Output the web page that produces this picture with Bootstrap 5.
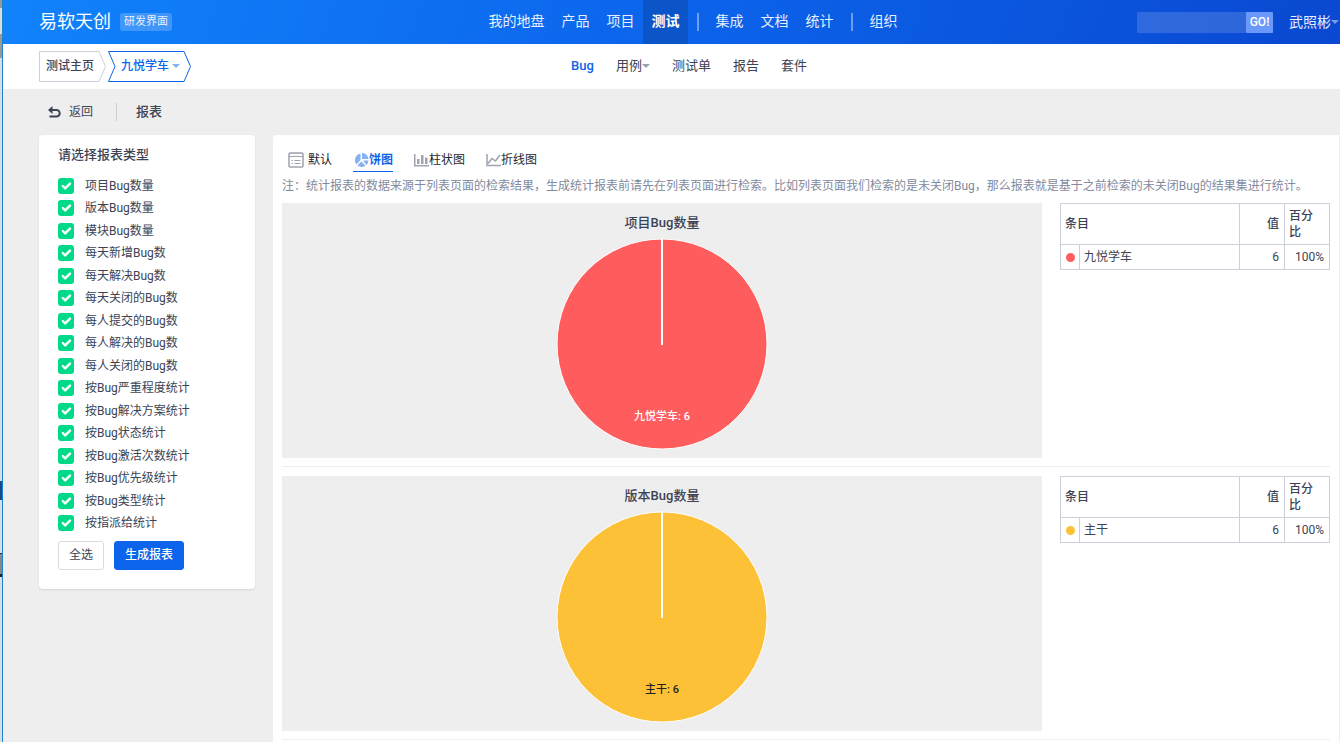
<!DOCTYPE html>
<html lang="zh-CN">
<head>
<meta charset="utf-8">
<meta name="viewport" content="width=device-width, initial-scale=1">
<title>报表 - 测试</title>
<link rel="stylesheet" href="https://cdn.jsdelivr.net/npm/bootstrap@5.3.0/dist/css/bootstrap.min.css">
<style>
html{background:#eee}
body{font:12px/18px Roboto,"Noto Sans CJK SC",sans-serif;color:#3c4353;background:#eee;min-height:100vh;overflow-x:hidden}
a{color:inherit;text-decoration:none}
b,th,.fw-bold{font-weight:500!important}
.desk-edge{width:3px;flex:none;border-right:1px solid #1b84d0;background:linear-gradient(#999 8px,#ddd 8px 34px,#999 34px 58px,#dcdddf 58px 481px,#174a86 481px 500px,#dcdddf 500px 553px,#333 553px 554px,#888 554px 574px,#222 574px 577px,#dcdddf 577px)}
.tri-grid{display:grid;grid-template-columns:1fr auto 1fr;align-items:center;padding:0 1px 0 36px}
.top-bar{height:44px;background:linear-gradient(110deg,#1183fb,#0c64eb 50%,#0a48d1 100%);color:#e7f0ff}
.brand-name{font-size:18px;line-height:24px;color:#fff}
.brand-tag{background:rgba(255,255,255,.2);border-radius:3px;font-size:11px;line-height:18px;padding:0 4px}
.brand-gap{gap:9px}
.main-menu{font-size:14px;line-height:42px;height:44px;padding-left:7px}
.main-menu a{padding:0 8px 0 9px;height:44px}
.main-menu a.on{background:#0b55c8;color:#fff;font-weight:700}
.menu-rule{width:2px;height:18px;background:rgba(255,255,255,.4);margin:0 8px 0 9px}
.search-text{width:109px;height:21px;border:0;background:rgba(255,255,255,.15);padding:0 6px;color:#fff}
.search-go{width:27px;height:21px;border:0;border-radius:1px;background:#6a98fb;color:#fff;padding:0;font-size:12px;font-weight:500;line-height:21px}
.user-link{font-size:14px;line-height:20px}
.tri-down{display:inline-block;border:4px solid transparent;border-top-color:currentColor;border-bottom:0;opacity:.5}
.sub-bar{height:45px;background:#fff}
.crumb{height:31px}
.crumb svg{position:absolute;inset:0}
.crumb a{position:relative;line-height:30px;font-weight:500}
.crumb-home{padding:0 14px 0 7px}
.crumb-here{padding:0 13px;gap:3px}
.blue-link{color:#0c64eb;font-weight:500}
.sub-menu{font-size:13px;line-height:18px;gap:22px;padding-bottom:2px}
.tool-row{height:46px;padding:0 45px}
.tool-rule{width:1px;height:18px;background:#ccc;margin:0 19px 0 23px}
.body-row{padding-left:36px;gap:18px}
.side-card{width:216px;flex:none;background:#fff;border-radius:4px;box-shadow:0 1px 2px rgba(0,0,0,.1);padding:11px 19px 19px}
.side-card h2,.tool-row h1,.pie-box h3{font-size:13px;line-height:18px;font-weight:500;margin:0}
.side-card h2{margin-bottom:11px}
.type-list{display:grid;grid-template-rows:repeat(8,22px 23px)}
.type-list label{display:flex;align-items:center;gap:11px;height:22px}
.type-list input{margin:0;width:16px;height:16px;flex:none;border:0;border-radius:2px;background-color:#00da88!important;background-size:16px 16px;box-shadow:none}
.btn-row{gap:10px;margin-top:6px}
.tool-btn{font-size:12px;line-height:18px;padding:4px 10px 5px;border-radius:3px;height:29px}
.tool-btn.plain{border:1px solid #d8dbe4;background:#fff;color:#3c4353}
.tool-btn.solid{background:#0c64eb;border-color:#0c64eb;color:#fff;font-weight:500}
.main-card{background:#fff;border-radius:4px 0 0 0;margin-right:1px;padding:12px 9px 9px;min-width:0}
.chart-tabs{padding:0 6px;gap:21px;height:25px}
.chart-tabs a{display:flex;align-items:center;height:25px;padding-top:1px;border-bottom:1px solid transparent;color:#23272f}
.chart-tabs a.on{color:#0c64eb;border-color:#0c64eb;font-weight:700;padding-left:1px}
.chart-tabs svg{color:#9ea3b0}
.chart-tabs a.on svg{color:#86b1f5}
.hint{color:#838a9d;line-height:18px;margin:5px 0 8px;white-space:nowrap}
.chart-row{gap:18px;padding-bottom:8px;border-bottom:1px solid #eee;margin-bottom:9px}
.pie-box{background:#eee;height:255px;padding-top:11px;text-align:center}
.pie-box svg{display:block;margin:6px auto 0}
.data-tab{width:270px;table-layout:fixed;color:#3c4353;line-height:16px;border-collapse:collapse;flex:none;align-self:flex-start}
.data-tab th,.data-tab td{border:1px solid #cbd0db;padding:4px 5px 4px 4px}
.data-tab td{height:25px}
.data-tab td:first-child{padding:4px 4px 4px 5px}
.dot{display:block;width:9px;height:9px;border-radius:50%}
</style>
</head>
<body class="d-flex">
<div class="desk-edge"></div>
<div class="flex-grow-1" style="min-width:0">
<header class="top-bar tri-grid">
  <div class="d-flex align-items-center brand-gap"><a href="#" class="brand-name">易软天创</a><span class="brand-tag">研发界面</span></div>
  <nav class="main-menu d-flex align-items-center">
    <a href="#">我的地盘</a><a href="#">产品</a><a href="#">项目</a><a href="#" class="on">测试</a><span class="menu-rule"></span><a href="#">集成</a><a href="#">文档</a><a href="#">统计</a><span class="menu-rule"></span><a href="#">组织</a>
  </nav>
  <div class="d-flex align-items-center justify-content-end">
    <form class="d-flex me-3"><input class="search-text" type="text" aria-label="搜索"><button class="search-go" type="button">GO!</button></form>
    <a href="#" class="user-link d-flex align-items-center">武照彬<span class="tri-down"></span></a>
  </div>
</header>
<div class="sub-bar tri-grid">
  <div class="d-flex">
    <div class="crumb position-relative"><svg width="68" height="31" fill="none" stroke="#cbd0db"><path d="M.5.5H60L66.500 15.500 60 30.500H.5z"/></svg><a href="#" class="crumb-home d-block">测试主页</a></div>
    <div class="crumb position-relative"><svg width="84" height="31" fill="none" stroke="#0c64eb"><path d="M.5.5H76L82.500 15.500 76 30.500H.5L7 15.500z"/></svg><a href="#" class="crumb-here blue-link d-flex align-items-center">九悦学车<span class="tri-down"></span></a></div>
  </div>
  <nav class="sub-menu d-flex">
    <a href="#" class="blue-link">Bug</a><a href="#" class="d-flex align-items-center">用例<span class="tri-down"></span></a><a href="#">测试单</a><a href="#">报告</a><a href="#">套件</a>
  </nav>
</div>
<div class="tool-row d-flex align-items-center">
  <a href="#" class="d-flex align-items-center gap-2"><svg width="13" height="12" fill="none" stroke="currentColor" stroke-width="2"><path d="M3 4h5.500a3 3 0 0 1 0 6.500H1.500"/><path d="M0 4 4.500 0v8z" fill="currentColor" stroke="none"/></svg>返回</a>
  <span class="tool-rule"></span><h1>报表</h1>
</div>
<div class="body-row d-flex align-items-start">
  <aside class="side-card">
    <h2>请选择报表类型</h2>
    <div class="type-list" id="types"></div>
    <div class="btn-row d-flex"><button type="button" class="btn tool-btn plain">全选</button><button type="button" class="btn tool-btn solid">生成报表</button></div>
  </aside>
  <main class="main-card flex-grow-1">
    <nav class="chart-tabs d-flex">
      <a href="#"><svg class="me-1" width="16" height="16" fill="none" stroke="currentColor"><rect x="1" y="1" width="14" height="14" rx="1" stroke-width="1.500"/><path d="M1 4.500h14M3.500 8.500h1.500m1.500 0h6M3.500 11.500h1.500m1.500 0h6"/></svg>默认</a>
      <a href="#" class="on"><svg width="15" height="16" fill="currentColor"><path d="M6.500 1.500v6.500L2.500 12.500A6.800 6.800 0 0 1 6.500 1.500zM8 1a7 7 0 0 1 6.500 6H8zM9 8.500h5.500a7 7 0 0 1-2 4.500zM7.500 9.500l4 4.200A7 7 0 0 1 3.500 13.500z"/></svg>饼图</a>
      <a href="#"><svg width="15" height="14" fill="currentColor"><path d="M0 1h1.500v11H15v1.500H0zM3 6h2.500v5H3zM7 2h2.500v9H7zM11 4.500h2.500V11H11z"/></svg>柱状图</a>
      <a href="#"><svg width="15" height="14" fill="none" stroke="currentColor" stroke-width="1.500"><path d="M1 1v11.500h14M2 10.500l4-5 3.500 2.500L14 2"/></svg>折线图</a>
    </nav>
    <p class="hint">注：统计报表的数据来源于列表页面的检索结果，生成统计报表前请先在列表页面进行检索。比如列表页面我们检索的是未关闭Bug，那么报表就是基于之前检索的未关闭Bug的结果集进行统计。</p>
    <div id="charts"></div>
  </main>
</div>
</div>
<script src="https://cdn.jsdelivr.net/npm/bootstrap@5.3.0/dist/js/bootstrap.bundle.min.js"></script>
<script>
document.getElementById('types').innerHTML=['项目Bug数量','版本Bug数量','模块Bug数量','每天新增Bug数','每天解决Bug数','每天关闭的Bug数','每人提交的Bug数','每人解决的Bug数','每人关闭的Bug数','按Bug严重程度统计','按Bug解决方案统计','按Bug状态统计','按Bug激活次数统计','按Bug优先级统计','按Bug类型统计','按指派给统计'].map((t,i)=>`<label for="t${i}"><input class="form-check-input" type="checkbox" id="t${i}" checked>${t}</label>`).join('');
document.getElementById('charts').innerHTML=[['项目Bug数量','九悦学车','#ff5d5d','#fff'],['版本Bug数量','主干','#fdc137','#222']].map(([t,n,c,f])=>`<section class="chart-row d-flex"><div class="pie-box flex-grow-1"><h3>${t}</h3><svg width="212" height="212"><circle cx="106" cy="106" r="105" fill="${c}" stroke="#fff"/><path d="M106 1v106" stroke="#fff" stroke-width="2"/><text x="106" y="182" text-anchor="middle" font-size="11" font-weight="500" fill="${f}">${n}: 6</text></svg></div><table class="data-tab"><colgroup><col style="width:19px"><col style="width:160px"><col style="width:45px"><col style="width:45px"></colgroup><thead><tr><th colspan="2">条目</th><th class="text-end">值</th><th>百分比</th></tr></thead><tbody><tr><td><span class="dot" style="background:${c}"></span></td><td>${n}</td><td class="text-end">6</td><td class="text-end">100%</td></tr></tbody></table></section>`).join('');
</script>
</body>
</html>
